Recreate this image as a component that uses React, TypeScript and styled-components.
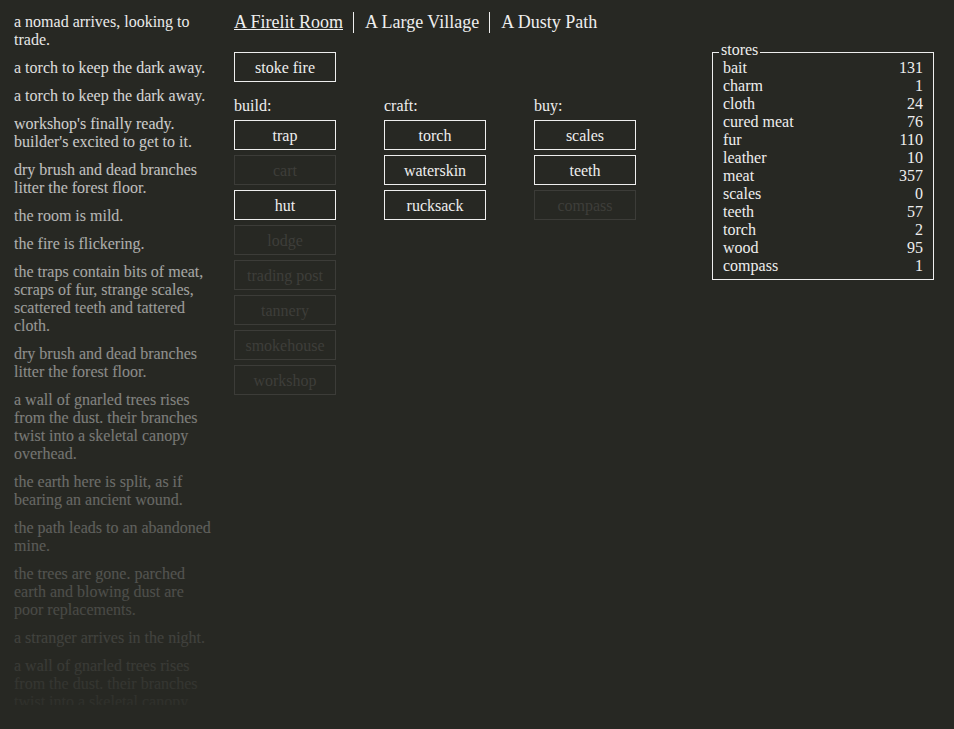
import React from "react";
import styled, { createGlobalStyle } from "styled-components";

const Global = createGlobalStyle`
  html, body {
    margin: 0;
    padding: 0;
    background: #272823;
  }
  body {
    font-family: "Liberation Serif", "Times New Roman", serif;
    font-size: 16px;
    line-height: 18px;
    color: #eeeeee;
  }
`;

const Page = styled.div`
  display: flex;
  align-items: flex-start;
  padding: 11px 0 0 14px;
  height: 729px;
  box-sizing: border-box;
  overflow: hidden;
`;

const Notifications = styled.div`
  position: relative;
  width: 200px;
  height: 692px;
  margin-top: 2px;
  overflow: hidden;
  flex-shrink: 0;
  margin-right: 20px;
`;

const Gradient = styled.div`
  position: absolute;
  inset: 0;
  background: linear-gradient(
    to bottom,
    rgba(39, 40, 35, 0) 0%,
    rgba(39, 40, 35, 1) 104%
  );
`;

const Notification = styled.div`
  margin-bottom: 10px;
`;

const Main = styled.div`
  width: 478px;
  flex-shrink: 0;
`;

const Header = styled.div`
  display: flex;
  font-size: 18px;
  line-height: 21px;
  margin-top: 1px;
  margin-bottom: 19px;
`;

const HeaderButton = styled.div<{ $selected?: boolean; $first?: boolean }>`
  padding: 0 10px 0 ${(p) => (p.$first ? "0" : "11px")};
  border-left: ${(p) => (p.$first ? "none" : "1px solid #eeeeee")};
  text-decoration: ${(p) => (p.$selected ? "underline" : "none")};
  cursor: pointer;
`;

const Button = styled.div<{ $disabled?: boolean }>`
  width: 80px;
  padding: 6px 10px 4px;
  border: 1px solid ${(p) => (p.$disabled ? "#3c3c38" : "#eeeeee")};
  color: ${(p) => (p.$disabled ? "#3e3e3a" : "#eeeeee")};
  text-align: center;
  margin-bottom: 5px;
  cursor: ${(p) => (p.$disabled ? "default" : "pointer")};
  white-space: nowrap;
`;

const Columns = styled.div`
  display: flex;
  margin-top: 15px;
`;

const Column = styled.div`
  width: 150px;
`;

const ColumnLabel = styled.div`
  margin-bottom: 5px;
`;

const Stores = styled.div`
  position: relative;
  margin-top: 41px;
  width: 200px;
  padding: 6px 10px 4px;
  border: 1px solid #eeeeee;
  flex-shrink: 0;
`;

const Legend = styled.div`
  position: absolute;
  top: -12px;
  left: 6px;
  padding: 0 2px;
  background: #272823;
`;

const StoreRow = styled.div`
  display: flex;
  justify-content: space-between;
`;

const notifications = [
  "a nomad arrives, looking to trade.",
  "a torch to keep the dark away.",
  "a torch to keep the dark away.",
  "workshop's finally ready. builder's excited to get to it.",
  "dry brush and dead branches litter the forest floor.",
  "the room is mild.",
  "the fire is flickering.",
  "the traps contain bits of meat, scraps of fur, strange scales, scattered teeth and tattered cloth.",
  "dry brush and dead branches litter the forest floor.",
  "a wall of gnarled trees rises from the dust. their branches twist into a skeletal canopy overhead.",
  "the earth here is split, as if bearing an ancient wound.",
  "the path leads to an abandoned mine.",
  "the trees are gone. parched earth and blowing dust are poor replacements.",
  "a stranger arrives in the night.",
  "a wall of gnarled trees rises from the dust. their branches twist into a skeletal canopy overhead.",
];

type Btn = { label: string; disabled?: boolean };

const build: Btn[] = [
  { label: "trap" },
  { label: "cart", disabled: true },
  { label: "hut" },
  { label: "lodge", disabled: true },
  { label: "trading post", disabled: true },
  { label: "tannery", disabled: true },
  { label: "smokehouse", disabled: true },
  { label: "workshop", disabled: true },
];

const craft: Btn[] = [
  { label: "torch" },
  { label: "waterskin" },
  { label: "rucksack" },
];

const buy: Btn[] = [
  { label: "scales" },
  { label: "teeth" },
  { label: "compass", disabled: true },
];

const stores: [string, number][] = [
  ["bait", 131],
  ["charm", 1],
  ["cloth", 24],
  ["cured meat", 76],
  ["fur", 110],
  ["leather", 10],
  ["meat", 357],
  ["scales", 0],
  ["teeth", 57],
  ["torch", 2],
  ["wood", 95],
  ["compass", 1],
];

const ButtonColumn: React.FC<{ label: string; items: Btn[] }> = ({ label, items }) => (
  <Column>
    <ColumnLabel>{label}</ColumnLabel>
    {items.map((b, i) => (
      <Button key={i} $disabled={b.disabled}>
        {b.label}
      </Button>
    ))}
  </Column>
);

export default function App() {
  return (
    <>
      <Global />
      <Page>
        <Notifications>
          {notifications.map((n, i) => (
            <Notification key={i}>{n}</Notification>
          ))}
          <Gradient />
        </Notifications>
        <Main>
          <Header>
            <HeaderButton $first $selected>
              A Firelit Room
            </HeaderButton>
            <HeaderButton>A Large Village</HeaderButton>
            <HeaderButton>A Dusty Path</HeaderButton>
          </Header>
          <Button>stoke fire</Button>
          <Columns>
            <ButtonColumn label="build:" items={build} />
            <ButtonColumn label="craft:" items={craft} />
            <ButtonColumn label="buy:" items={buy} />
          </Columns>
        </Main>
        <Stores>
          <Legend>stores</Legend>
          {stores.map(([name, v]) => (
            <StoreRow key={name}>
              <span>{name}</span>
              <span>{v}</span>
            </StoreRow>
          ))}
        </Stores>
      </Page>
    </>
  );
}
